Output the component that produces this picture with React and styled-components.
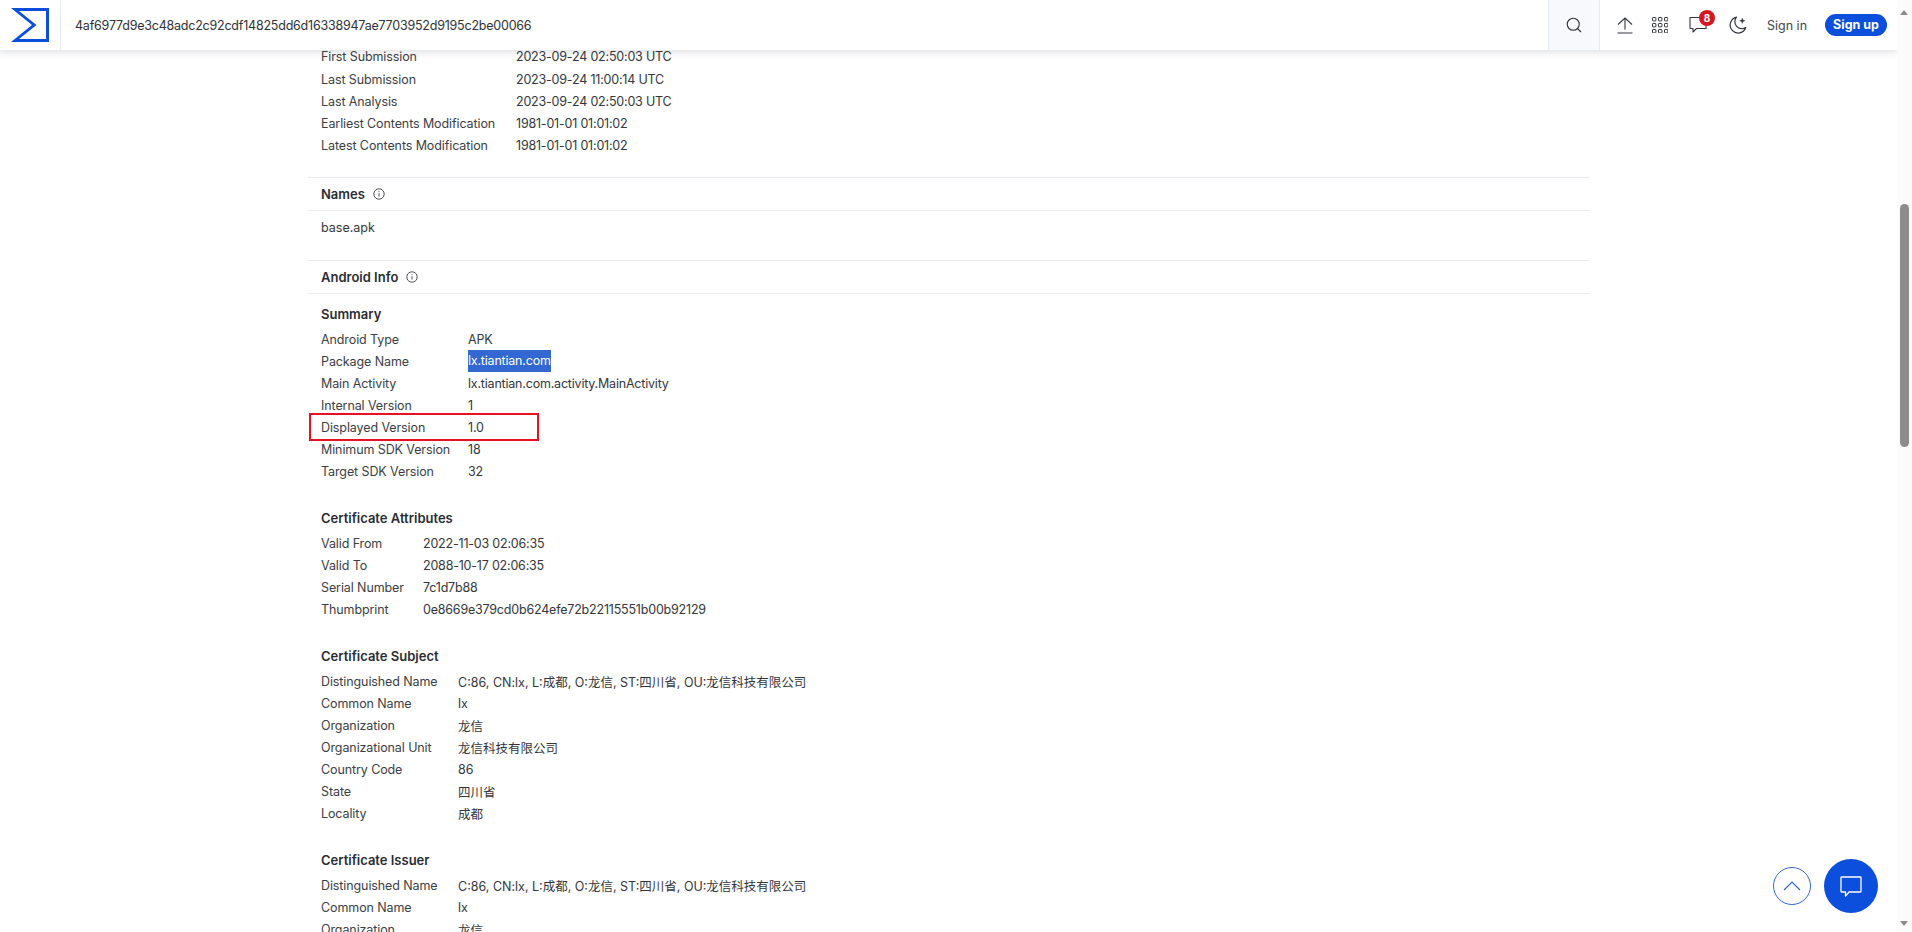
import React from 'react';
import styled, { createGlobalStyle } from 'styled-components';
import { Search } from 'lucide-react';

const GlobalStyle = createGlobalStyle`
  html, body {
    margin: 0;
    height: 100%;
    overflow: hidden;
    background: #fff;
  }
  body {
    font-family: Inter, "Noto Sans CJK SC", sans-serif;
    font-size: 12.5px;
    color: #33363d;
  }
`;

const Page = styled.div`
  display: flex;
  width: 1912px;
  height: 932px;
  overflow: hidden;
`;

const Main = styled.div`
  position: relative;
  flex: 1;
  min-width: 0;
  overflow: hidden;
`;

const TopBar = styled.header`
  position: absolute;
  top: 0;
  left: 0;
  right: 0;
  z-index: 2;
  height: 50px;
  display: flex;
  align-items: stretch;
  background: #fff;
  box-shadow: 0 2px 8px rgba(60, 70, 90, 0.18);
`;

const LogoCell = styled.div`
  width: 61px;
  display: flex;
  align-items: center;
  justify-content: center;
  border-right: 1px solid #e5e9f2;
  box-sizing: border-box;
`;

const HashInput = styled.div`
  flex: 1;
  padding-left: 14px;
  display: flex;
  align-items: center;
  font-size: 12.5px;
  letter-spacing: -0.22px;
  color: #2f3238;
`;

const SearchCell = styled.div`
  width: 52px;
  display: flex;
  align-items: center;
  justify-content: center;
  background: #f8f9fc;
  border-left: 1px solid #e5e9f2;
  border-right: 1px solid #e5e9f2;
  box-sizing: border-box;
  color: #33363d;
`;

const Actions = styled.div`
  width: 297px;
  display: flex;
  align-items: center;
  padding-left: 17px;
  box-sizing: border-box;
`;

const IconSlot = styled.div`
  position: relative;
  width: ${p => p.$w}px;
  display: flex;
  justify-content: flex-start;
  color: #33363d;
`;

const Badge = styled.span`
  position: absolute;
  top: -6px;
  left: 10px;
  width: 16px;
  height: 16px;
  border-radius: 50%;
  background: #d5181f;
  color: #fff;
  font-size: 10px;
  font-weight: 700;
  line-height: 16px;
  text-align: center;
`;

const SignIn = styled.span`
  font-size: 12.5px;
  color: #43464d;
  width: 58px;
`;

const SignUp = styled.span`
  width: 62px;
  height: 22px;
  border-radius: 11px;
  background: #0b4fdc;
  color: #fff;
  font-size: 12.5px;
  font-weight: 700;
  line-height: 22px;
  text-align: center;
`;

const Content = styled.main`
  width: 1282px;
  margin-left: 308px;
  padding-top: 45px;
`;

const Section = styled.section`
  padding: 0 13px;
`;

const SectionHead = styled.div`
  display: flex;
  align-items: center;
  gap: 8px;
  height: 32px;
  margin: 0 -13px;
  padding: 0 13px;
  border-top: 1px solid #e9ebf0;
  border-bottom: 1px solid #e9ebf0;
  font-size: 13px;
  font-weight: 600;
  color: #2a2d33;
`;

const InfoTable = styled.div`
  position: relative;
  display: grid;
  grid-template-columns: ${p => p.$labelWidth}px 1fr;
  grid-template-rows: ${p => p.$firstRow || 22}px;
  grid-auto-rows: 22px;
  align-items: center;
  margin-bottom: ${p => p.$after || 25}px;
`;

const Label = styled.div`
  color: #3b3e45;
  letter-spacing: -0.1px;
`;

const Value = styled.div`
  color: #33363d;
  letter-spacing: ${p => (p.$cjk ? 0 : -0.2)}px;
  white-space: nowrap;
`;

const Selected = styled.span`
  display: inline-block;
  height: 22px;
  line-height: 22px;
  background: #3367d1;
  color: #fff;
`;

const SubTitle = styled.h4`
  margin: ${p => p.$before || 0}px 0 3px;
  height: 22px;
  line-height: 22px;
  font-size: 13px;
  font-weight: 600;
  color: #2a2d33;
`;

const NameLine = styled.div`
  height: 22px;
  line-height: 22px;
  margin: 6px 0 21px;
`;

const Callout = styled.div`
  position: absolute;
  left: -12px;
  top: 85px;
  width: 230px;
  height: 28px;
  border: 2px solid #e81123;
  box-sizing: border-box;
  pointer-events: none;
`;

const Floating = styled.div`
  position: absolute;
  right: 19px;
  bottom: 19px;
  z-index: 3;
  display: flex;
  align-items: center;
  gap: 13px;
`;

const UpButton = styled.div`
  width: 38px;
  height: 38px;
  border-radius: 50%;
  border: 1px solid #3367d1;
  box-sizing: border-box;
  display: flex;
  align-items: center;
  justify-content: center;
`;

const ChatButton = styled.div`
  width: 54px;
  height: 54px;
  border-radius: 50%;
  background: #0b4fdc;
  display: flex;
  align-items: center;
  justify-content: center;
`;

const ScrollTrack = styled.aside`
  position: relative;
  width: 15px;
  background: #fbfbfb;
`;

const ScrollThumb = styled.div`
  position: absolute;
  top: 204px;
  left: 3px;
  width: 9px;
  height: 243px;
  border-radius: 5px;
  background: #8c8c8c;
`;

const Arrow = styled.div`
  position: absolute;
  left: 3px;
  ${p => (p.$down ? 'bottom: 6px;' : 'top: 10px;')}
  width: 0;
  height: 0;
  border-left: 4.5px solid transparent;
  border-right: 4.5px solid transparent;
  ${p => (p.$down ? 'border-top' : 'border-bottom')}: 5px solid #8c8c8c;
`;

const dates = [
  ['First Submission', '2023-09-24 02:50:03 UTC'],
  ['Last Submission', '2023-09-24 11:00:14 UTC'],
  ['Last Analysis', '2023-09-24 02:50:03 UTC'],
  ['Earliest Contents Modification', '1981-01-01 01:01:02'],
  ['Latest Contents Modification', '1981-01-01 01:01:02'],
];

const summary = [
  ['Android Type', 'APK'],
  ['Package Name', <Selected key="pkg">lx.tiantian.com</Selected>],
  ['Main Activity', 'lx.tiantian.com.activity.MainActivity'],
  ['Internal Version', '1'],
  ['Displayed Version', '1.0'],
  ['Minimum SDK Version', '18'],
  ['Target SDK Version', '32'],
];

const attributes = [
  ['Valid From', '2022-11-03 02:06:35'],
  ['Valid To', '2088-10-17 02:06:35'],
  ['Serial Number', '7c1d7b88'],
  ['Thumbprint', '0e8669e379cd0b624efe72b22115551b00b92129'],
];

const subject = [
  ['Distinguished Name', 'C:86, CN:lx, L:成都, O:龙信, ST:四川省, OU:龙信科技有限公司'],
  ['Common Name', 'lx'],
  ['Organization', '龙信'],
  ['Organizational Unit', '龙信科技有限公司'],
  ['Country Code', '86'],
  ['State', '四川省'],
  ['Locality', '成都'],
];

const issuer = subject.slice(0, 3);

function Rows({ items, cjk }) {
  return items.map(([label, value]) => (
    <React.Fragment key={label}>
      <Label>{label}</Label>
      <Value $cjk={cjk}>{value}</Value>
    </React.Fragment>
  ));
}

function InfoIcon() {
  return (
    <svg width="12" height="12" viewBox="0 0 12 12" fill="none" stroke="#3b3e45" strokeWidth="0.9">
      <circle cx="6" cy="6" r="5.2" />
      <path d="M6 5.2v3.3M6 3.2v.9" />
    </svg>
  );
}

function Logo() {
  return (
    <svg width="38" height="34" viewBox="0 0 38 34">
      <path
        fillRule="evenodd"
        fill="#0b4fdc"
        d="M0 0H38V34H0L21 17ZM8 3L25.5 17L8 31H35V3Z"
      />
    </svg>
  );
}

function UploadIcon() {
  return (
    <svg width="16" height="17" viewBox="0 0 16 17" fill="none" stroke="#33363d" strokeWidth="1.1">
      <path d="M8 12.5V1M1 7.5L8 1l7 6.5M0.5 16h15" />
    </svg>
  );
}

function GridIcon() {
  const spots = [0, 6, 12];
  return (
    <svg width="16" height="16" viewBox="0 0 16 16" fill="none" stroke="#33363d" strokeWidth="1">
      {spots.flatMap(y => spots.map(x => (
        <rect key={`${x}-${y}`} x={x + 0.5} y={y + 0.5} width="3.4" height="3.4" rx="0.6" />
      )))}
    </svg>
  );
}

function ChatIcon() {
  return (
    <svg width="18" height="18" viewBox="0 0 18 18" fill="none" stroke="#33363d" strokeWidth="1.1">
      <path d="M1 1.5h16v11H7.5L4 16v-3.5H1.5a.5.5 0 0 1-.5-.5Z" strokeLinejoin="round" />
    </svg>
  );
}

function MoonIcon() {
  return (
    <svg width="18" height="18" viewBox="0 0 18 18" fill="none" stroke="#33363d" strokeWidth="1.2">
      <path d="M7.5 1.2A8 8 0 1 0 16.8 11.5 7 7 0 0 1 7.5 1.2Z" strokeLinejoin="round" />
      <path d="M13.3 2.2l.7 1.9 1.9.7-1.9.7-.7 1.9-.7-1.9-1.9-.7 1.9-.7Z" fill="#33363d" strokeWidth="0.4" />
    </svg>
  );
}

export default function App() {
  return (
    <Page>
      <GlobalStyle />
      <Main>
        <TopBar>
          <LogoCell><Logo /></LogoCell>
          <HashInput>4af6977d9e3c48adc2c92cdf14825dd6d16338947ae7703952d9195c2be00066</HashInput>
          <SearchCell><Search size={18} strokeWidth={1.5} /></SearchCell>
          <Actions>
            <IconSlot $w={35}><UploadIcon /></IconSlot>
            <IconSlot $w={37}><GridIcon /></IconSlot>
            <IconSlot $w={40}><ChatIcon /><Badge>8</Badge></IconSlot>
            <IconSlot $w={38}><MoonIcon /></IconSlot>
            <SignIn>Sign in</SignIn>
            <SignUp>Sign up</SignUp>
          </Actions>
        </TopBar>
        <Content>
          <Section>
            <InfoTable $labelWidth={195} $firstRow={23} $after={21}><Rows items={dates} /></InfoTable>
          </Section>
          <Section>
            <SectionHead>Names <InfoIcon /></SectionHead>
            <NameLine>base.apk</NameLine>
          </Section>
          <Section>
            <SectionHead>Android Info <InfoIcon /></SectionHead>
            <SubTitle $before={9}>Summary</SubTitle>
            <InfoTable $labelWidth={147}>
              <Rows items={summary} />
              <Callout />
            </InfoTable>
            <SubTitle>Certificate Attributes</SubTitle>
            <InfoTable $labelWidth={102}><Rows items={attributes} /></InfoTable>
            <SubTitle>Certificate Subject</SubTitle>
            <InfoTable $labelWidth={137}><Rows items={subject} cjk /></InfoTable>
            <SubTitle>Certificate Issuer</SubTitle>
            <InfoTable $labelWidth={137}><Rows items={issuer} cjk /></InfoTable>
          </Section>
        </Content>
        <Floating>
          <UpButton>
            <svg width="18" height="10" viewBox="0 0 18 10" fill="none" stroke="#3367d1" strokeWidth="1.2">
              <path d="M1 9l8-8 8 8" />
            </svg>
          </UpButton>
          <ChatButton>
            <svg width="22" height="21" viewBox="0 0 22 21" fill="none" stroke="#fff" strokeWidth="1.3">
              <path d="M1.5 1h19a.5.5 0 0 1 .5.5v14a.5.5 0 0 1-.5.5H9l-3.5 4v-4h-4a.5.5 0 0 1-.5-.5v-14a.5.5 0 0 1 .5-.5Z" strokeLinejoin="round" />
            </svg>
          </ChatButton>
        </Floating>
      </Main>
      <ScrollTrack>
        <Arrow />
        <ScrollThumb />
        <Arrow $down />
      </ScrollTrack>
    </Page>
  );
}
